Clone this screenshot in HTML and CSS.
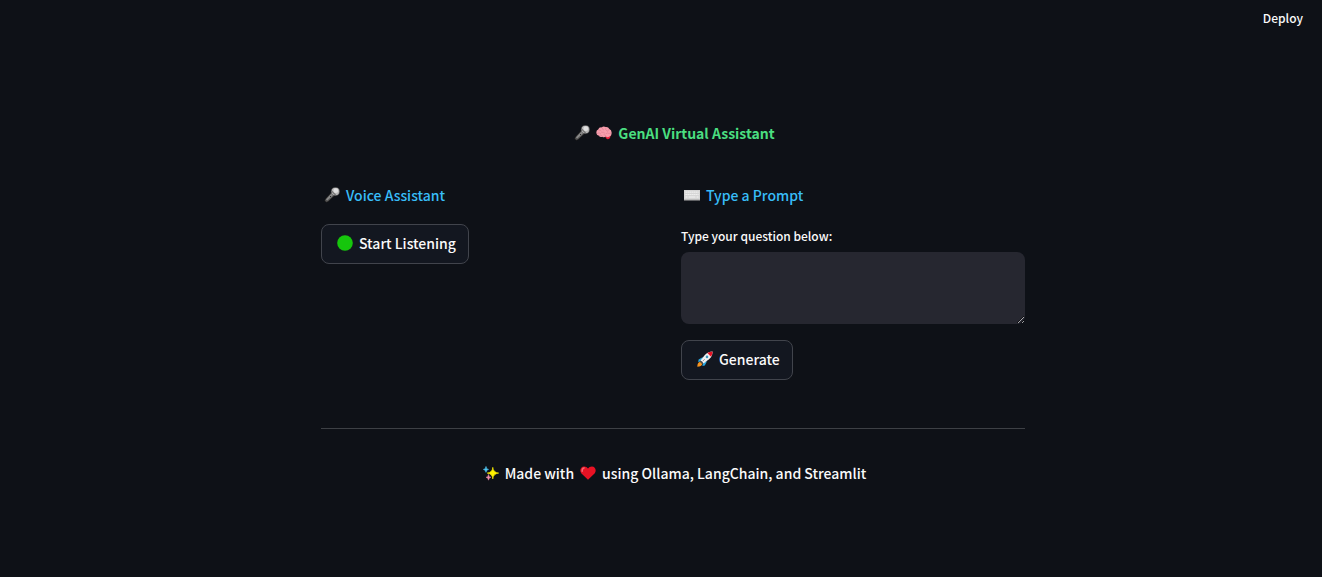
FILE: index.html
```html
<!DOCTYPE html>
<html lang="en">
<head>
<meta charset="utf-8">
<meta name="viewport" content="width=device-width, initial-scale=1">
<title>GenAI Virtual Assistant</title>
<link rel="stylesheet" href="styles.css">
</head>
<body>
<svg class="defs" aria-hidden="true">
  <defs>
    <symbol id="mic" viewBox="0 0 16 16">
      <path d="M8 4.6 11.4 8 4 14.8Q2.4 15.8 1 14.6.2 13.2 1.4 11.9Z" fill="#555" stroke="#161616" stroke-width=".7"/>
      <path d="M8.3 5.8 9.9 7.4 3.2 13.6 2 12.6Z" fill="#8b8b8b"/>
      <path d="M6.1 9.1l.9.9" stroke="#222" stroke-width="1"/>
      <circle cx="11.4" cy="4.5" r="4.1" fill="#b9b9b9" stroke="#444" stroke-width=".5"/>
      <path d="M7.9 4.3 11.6 8" stroke="#777" stroke-width="1.3"/>
      <circle cx="11.8" cy="3.7" r="2.4" fill="#e0e0e0"/>
    </symbol>
  </defs>
</svg>
<header class="toolbar"><button class="deploy" type="button">Deploy</button></header>
<div class="page">
<main class="content">
  <h1 class="title">
    <svg class="icon" aria-hidden="true"><use href="#mic"/></svg>
    <svg class="icon" viewBox="0 0 16 16" aria-hidden="true">
      <path d="M9.3 10.5 14.6 10.2Q14.4 14 11.6 14.3 9.3 13.7 9.3 10.5Z" fill="#e3203c"/>
      <path d="M.5 8.5Q-.2 5.6 2.2 4.6 3 2.1 5.6 2.4 7.5.9 9.7 2.1 12.4 1.7 13.3 4.1 16 5.3 15.5 8 16 10.6 13.4 11.5 11.8 12.7 9.9 11.6 8 13 6.2 11.7 3.5 12.5 2.6 10.5.9 10.3.5 8.5Z" fill="#f79ead"/>
      <path d="M3 5.2Q4.7 4.6 5.4 6.1M6.2 3Q6 4.7 7.7 5M9.8 2.6Q8.8 4.6 10.6 5.8M13 4.6Q11.3 5 11.5 6.5M1.2 8.5Q3 7 4.6 8.3M5.7 7.4Q7.3 6.4 8.6 7.9M10 8.6Q11.6 7.3 13 8.5L15 8M3.2 10.4Q5 9.2 6.3 11M8 9.5Q9.5 9.6 9.8 11" fill="none" stroke="#dc7f93" stroke-width=".6" stroke-linecap="round"/>
    </svg>
    <span>GenAI Virtual Assistant</span>
  </h1>
  <div class="columns">
    <section class="column">
      <h2 class="heading">
        <svg class="icon" aria-hidden="true"><use href="#mic"/></svg>
        <span>Voice Assistant</span>
      </h2>
      <button class="button" type="button">
        <svg class="icon" viewBox="0 0 16 16" aria-hidden="true"><circle cx="8" cy="8" r="7.8" fill="#16c60c"/></svg>
        <span>Start Listening</span>
      </button>
    </section>
    <section class="column">
      <h2 class="heading">
        <svg class="icon" viewBox="0 0 16 16" aria-hidden="true">
          <path d="M0 3H16V13.5H0Z" fill="#b0b0b0"/>
          <path d="M0 3H16V12.3H0Z" fill="#d6d6d6"/>
          <path d="M1.5 5.2H14.5M1.5 7.5H14.5" stroke="#f4f4f4" stroke-width="1.2" stroke-dasharray="1.3 .7"/>
          <path d="M1.5 10H3.5M4.5 10H11.5M12.5 10H14.5" stroke="#f4f4f4" stroke-width="1.2"/>
        </svg>
        <span>Type a Prompt</span>
      </h2>
      <label class="label" for="question">Type your question below:</label>
      <textarea class="textarea" id="question"></textarea>
      <button class="button" type="button">
        <svg class="icon" viewBox="0 0 16 16" aria-hidden="true">
          <path d="M.3 15.7Q.3 11.5 3.3 10.8L5.4 12.8Q4.7 15.7.3 15.7Z" fill="#f7931e"/>
          <path d="M6 6 1.6 8.5 1.2 11 4.6 10ZM10 10.2 7.8 14.5 5.4 15.1 6.2 11.6Z" fill="#2aa9e0"/>
          <path d="M15.6.4Q11 .5 7.8 3.9L3.6 9.6 6.5 12.5 12 8.3Q15.6 5 15.6.4Z" fill="#f2f2f2"/>
          <path d="M15.6.4Q12.6.5 10.3 1.9L14 5.7Q15.6 3.4 15.6.4Z" fill="#e81224"/>
          <path d="M3.6 9.6 6.5 12.5 5.3 13.3 2.8 10.8Z" fill="#4d4d4d"/>
          <circle cx="10" cy="5.9" r="1.3" fill="#3c97bd"/>
          <path d="M7.7 8.2 5.6 10.4" stroke="#999" stroke-width="1"/>
        </svg>
        <span>Generate</span>
      </button>
    </section>
  </div>
  <hr class="divider">
  <footer class="footer">
    <svg class="icon" viewBox="0 0 16 16" aria-hidden="true">
      <path d="M9.8 2.3Q10.2 7.4 15.7 8.1 10.2 8.8 9.8 14 9.4 8.8 4.2 8.1 9.4 7.4 9.8 2.3Z" fill="#fff100" stroke="#fff100" stroke-width=".6"/>
      <path d="M3 1.4Q3.2 4.1 5.6 4.4 3.2 4.7 3 7.4 2.8 4.7.3 4.4 2.8 4.1 3 1.4Z" fill="#50c8f4" stroke="#50c8f4" stroke-width=".5"/>
      <path d="M5.5 9.4Q5.7 12 8 12.3 5.7 12.6 5.5 15.2 5.3 12.6 3 12.3 5.3 12 5.5 9.4Z" fill="#ef8ca8" stroke="#ef8ca8" stroke-width=".5"/>
    </svg>
    <span>Made with</span>
    <svg class="icon" viewBox="0 0 16 16" aria-hidden="true">
      <path d="M8 14.8 1.2 8.2C-.8 5.6.8 1.4 4.1 1.4Q6.8 1.4 8 3.6 9.2 1.4 11.9 1.4C15.2 1.4 16.8 5.6 14.8 8.2Z" fill="#e81224"/>
      <path d="M2.2 6.3Q1.8 3.6 4.2 2.9" fill="none" stroke="#f36b76" stroke-width="1.4" stroke-linecap="round"/>
    </svg>
    <span>using Ollama, LangChain, and Streamlit</span>
  </footer>
</main>
</div>
</body>
</html>
```
FILE: styles.css
```css
* {
  box-sizing: border-box;
}

body {
  margin: 0;
  min-height: 100vh;
  background: #0e1117;
  color: #fafafa;
  font-family: "Source Sans Pro", "Noto Sans CJK SC", sans-serif;
  font-size: 14px;
  font-weight: 500;
  line-height: 24px;
}

.defs {
  display: block;
  width: 0;
  height: 0;
}

.toolbar {
  display: flex;
  justify-content: flex-end;
  padding: 6px 19px;
}

.deploy {
  padding: 0;
  border: 0;
  background: none;
  color: inherit;
  font: inherit;
  font-size: 12px;
  line-height: 24px;
}

.page {
  padding: 85px 24px 80px 48px;
}

.content {
  max-width: 704px;
  margin: 0 auto;
}

.icon {
  flex: none;
  width: 16px;
  height: 16px;
}

.title,
.heading,
.footer {
  display: flex;
  align-items: center;
  gap: 6px;
  margin: 0;
  font-size: 14px;
}

.title,
.footer {
  justify-content: center;
  padding-left: 3px;
}

.title {
  color: #4ade80;
  font-weight: 700;
}

.columns {
  display: grid;
  grid-template-columns: 1fr 1fr;
  gap: 16px;
  margin-top: 38px;
}

.column {
  display: flex;
  flex-direction: column;
  align-items: flex-start;
}

.heading {
  padding-left: 3px;
  color: #38bdf8;
  font-weight: 500;
  margin-bottom: 17px;
}

.button {
  display: flex;
  align-items: center;
  gap: 6px;
  height: 40px;
  padding: 0 12px 2px 15px;
  border: 1px solid #41444c;
  border-radius: 8px;
  background: #131720;
  color: inherit;
  font: inherit;
}

.label {
  margin-bottom: 4px;
  font-size: 12px;
}

.textarea {
  display: block;
  width: 100%;
  height: 72px;
  margin-bottom: 16px;
  padding: 12px;
  border: 0;
  border-radius: 8px;
  background: #262730;
  color: inherit;
  font: inherit;
  resize: vertical;
}

.divider {
  margin: 48px 0 32px;
  border: 0;
  border-top: 1px solid #3d4045;
}
```
